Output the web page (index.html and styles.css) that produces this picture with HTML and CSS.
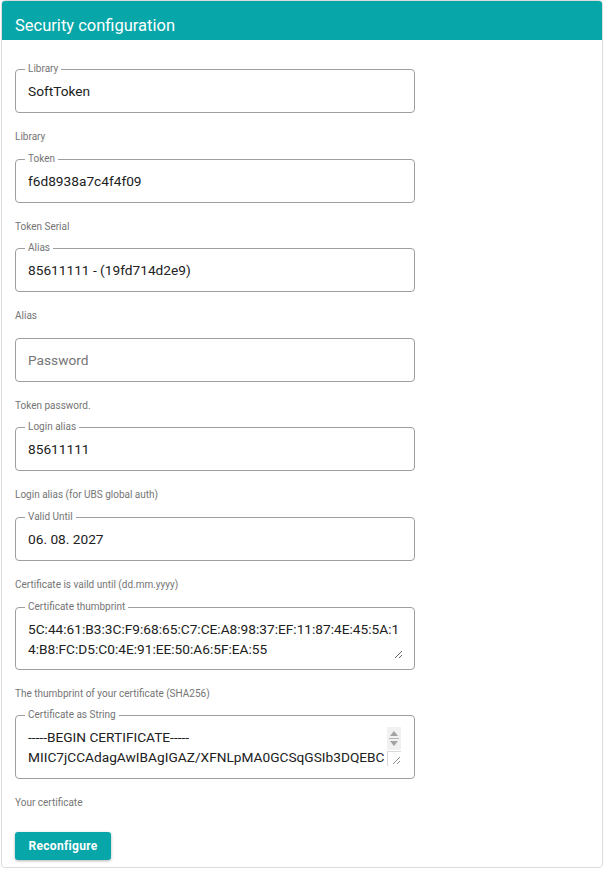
FILE: index.html
```html
<!DOCTYPE html>
<html lang="en">
<head>
<meta charset="utf-8">
<title>Security configuration</title>
<link rel="stylesheet" href="styles.css">
</head>
<body>
<div class="card">
  <div class="card-header">Security configuration</div>
  <div class="card-body">
    <div class="field">
      <span class="field-label">Library</span>
      <input class="field-input" type="text" value="SoftToken">
    </div>
    <div class="helper">Library</div>

    <div class="field">
      <span class="field-label">Token</span>
      <input class="field-input" type="text" value="f6d8938a7c4f4f09">
    </div>
    <div class="helper">Token Serial</div>

    <div class="field">
      <span class="field-label">Alias</span>
      <input class="field-input" type="text" value="85611111 - (19fd714d2e9)">
    </div>
    <div class="helper">Alias</div>

    <div class="field">
      <input class="field-input" type="password" placeholder="Password">
    </div>
    <div class="helper">Token password.</div>

    <div class="field">
      <span class="field-label">Login alias</span>
      <input class="field-input" type="text" value="85611111">
    </div>
    <div class="helper">Login alias (for UBS global auth)</div>

    <div class="field">
      <span class="field-label">Valid Until</span>
      <input class="field-input" type="text" value="06. 08. 2027">
    </div>
    <div class="helper">Certificate is vaild until (dd.mm.yyyy)</div>

    <div class="field field-area">
      <span class="field-label">Certificate thumbprint</span>
      <textarea class="field-textarea">5C:44:61:B3:3C:F9:68:65:C7:CE:A8:98:37:EF:11:87:4E:45:5A:14:B8:FC:D5:C0:4E:91:EE:50:A6:5F:EA:55</textarea>
    </div>
    <div class="helper">The thumbprint of your certificate (SHA256)</div>

    <div class="field field-area field-area-tall">
      <span class="field-label">Certificate as String</span>
      <textarea class="field-textarea field-textarea-scroll">-----BEGIN CERTIFICATE-----
MIIC7jCCAdagAwIBAgIGAZ/XFNLpMA0GCSqGSIb3DQEBCwUAMDkxCzAJBgNVBAYT
AkNIMQwwCgYDVQQKEwNVQlMxHDAaBgNVBAMTEzg1NjExMTExIFNvZnRUb2tlbjAe
Fw0yNTA4MDYwMDAwMDBaFw0yNzA4MDYwMDAwMDBaMDkxCzAJBgNVBAYTAkNIMQww
-----END CERTIFICATE-----</textarea>
      <div class="scrollbar" aria-hidden="true">
        <div class="scroll-track">
          <span class="arrow arrow-up"></span>
          <span class="scroll-thumb"></span>
          <span class="arrow arrow-down"></span>
        </div>
        <div class="scroll-corner">
          <svg class="grip" width="14" height="14" viewBox="0 0 14 14">
            <line x1="5" y1="12" x2="12" y2="5" stroke="#8a8a8a" stroke-width="1"/>
            <line x1="9" y1="12" x2="12" y2="9" stroke="#8a8a8a" stroke-width="1"/>
          </svg>
        </div>
      </div>
    </div>
    <div class="helper">Your certificate</div>

    <div class="actions">
      <button class="btn" type="button">Reconfigure</button>
    </div>
  </div>
</div>
</body>
</html>
```

FILE: styles.css
```css
html, body {
  margin: 0;
  padding: 0;
  background: #ffffff;
}

body {
  padding: 0 1px;
  font-family: Roboto, "Liberation Sans", Arial, sans-serif;
  color: #212121;
}

.card {
  width: 602px;
  box-sizing: border-box;
  border: 1px solid #dcdcdc;
  border-radius: 4px;
  overflow: hidden;
  background: #ffffff;
}

.card-header {
  background: #07a6a9;
  color: #ffffff;
  font-size: 16.5px;
  line-height: 20px;
  height: 39px;
  box-sizing: border-box;
  padding: 15px 13px 4px;
}

.card-body {
  padding: 29px 13px 7px;
}

.field {
  position: relative;
  width: 400px;
  box-sizing: border-box;
  border: 1px solid #9e9e9e;
  border-radius: 4px;
  height: 44px;
}

.field-area {
  height: auto;
}

.field-label {
  position: absolute;
  top: -7px;
  left: 9px;
  padding: 0 3px;
  background: #ffffff;
  font-size: 10px;
  line-height: 12px;
  color: #757575;
  white-space: nowrap;
}

.field-input {
  display: block;
  width: 100%;
  height: 42px;
  box-sizing: border-box;
  border: none;
  outline: none;
  background: transparent;
  padding: 0 12px;
  font-family: Roboto, "Liberation Sans", Arial, sans-serif;
  font-size: 13.7px;
  color: #212121;
}

.field-input::placeholder {
  color: #757575;
}

.field-textarea {
  display: block;
  box-sizing: border-box;
  width: calc(100% - 22px);
  height: 40px;
  margin: 11px 10px 10px 11px;
  padding: 0 0 0 1px;
  border: none;
  outline: none;
  background: transparent;
  font-family: Roboto, "Liberation Sans", Arial, sans-serif;
  font-size: 13.7px;
  line-height: 20px;
  color: #212121;
  resize: vertical;
}

.field-textarea-scroll {
  padding-right: 17px;
  overflow: hidden;
  resize: none;
  margin-bottom: 11px;
}

.scrollbar {
  position: absolute;
  top: 11px;
  right: 13px;
  width: 14px;
  height: 39px;
  display: flex;
  flex-direction: column;
}

.scroll-track {
  height: 23px;
  background: #f1f1f1;
  display: flex;
  flex-direction: column;
  align-items: center;
  justify-content: center;
  gap: 2px;
}

.arrow {
  width: 0;
  height: 0;
  border-left: 4px solid transparent;
  border-right: 4px solid transparent;
}

.arrow-up {
  border-bottom: 5px solid #a3a3a3;
}

.arrow-down {
  border-top: 5px solid #a3a3a3;
}

.scroll-thumb {
  width: 10px;
  height: 1px;
  background: #b5b5b5;
}

.scroll-corner {
  flex: 1;
  box-sizing: border-box;
  border-left: 1px solid #dadada;
  border-top: 1px solid #dadada;
  background: #ffffff;
  margin-top: 1px;
}

.grip {
  display: block;
}

.helper {
  margin: 18px 0 15.6px;
  font-size: 10px;
  line-height: 12px;
  color: #757575;
}

.actions {
  margin-top: 23px;
}

.btn {
  display: block;
  height: 28px;
  padding: 0 13.5px;
  border: none;
  border-radius: 3px;
  background: #07a6a9;
  color: #ffffff;
  font-family: Roboto, "Liberation Sans", Arial, sans-serif;
  font-size: 12px;
  font-weight: 700;
  letter-spacing: 0.3px;
  box-shadow: 0 1px 3px rgba(0, 0, 0, 0.3);
}
```
